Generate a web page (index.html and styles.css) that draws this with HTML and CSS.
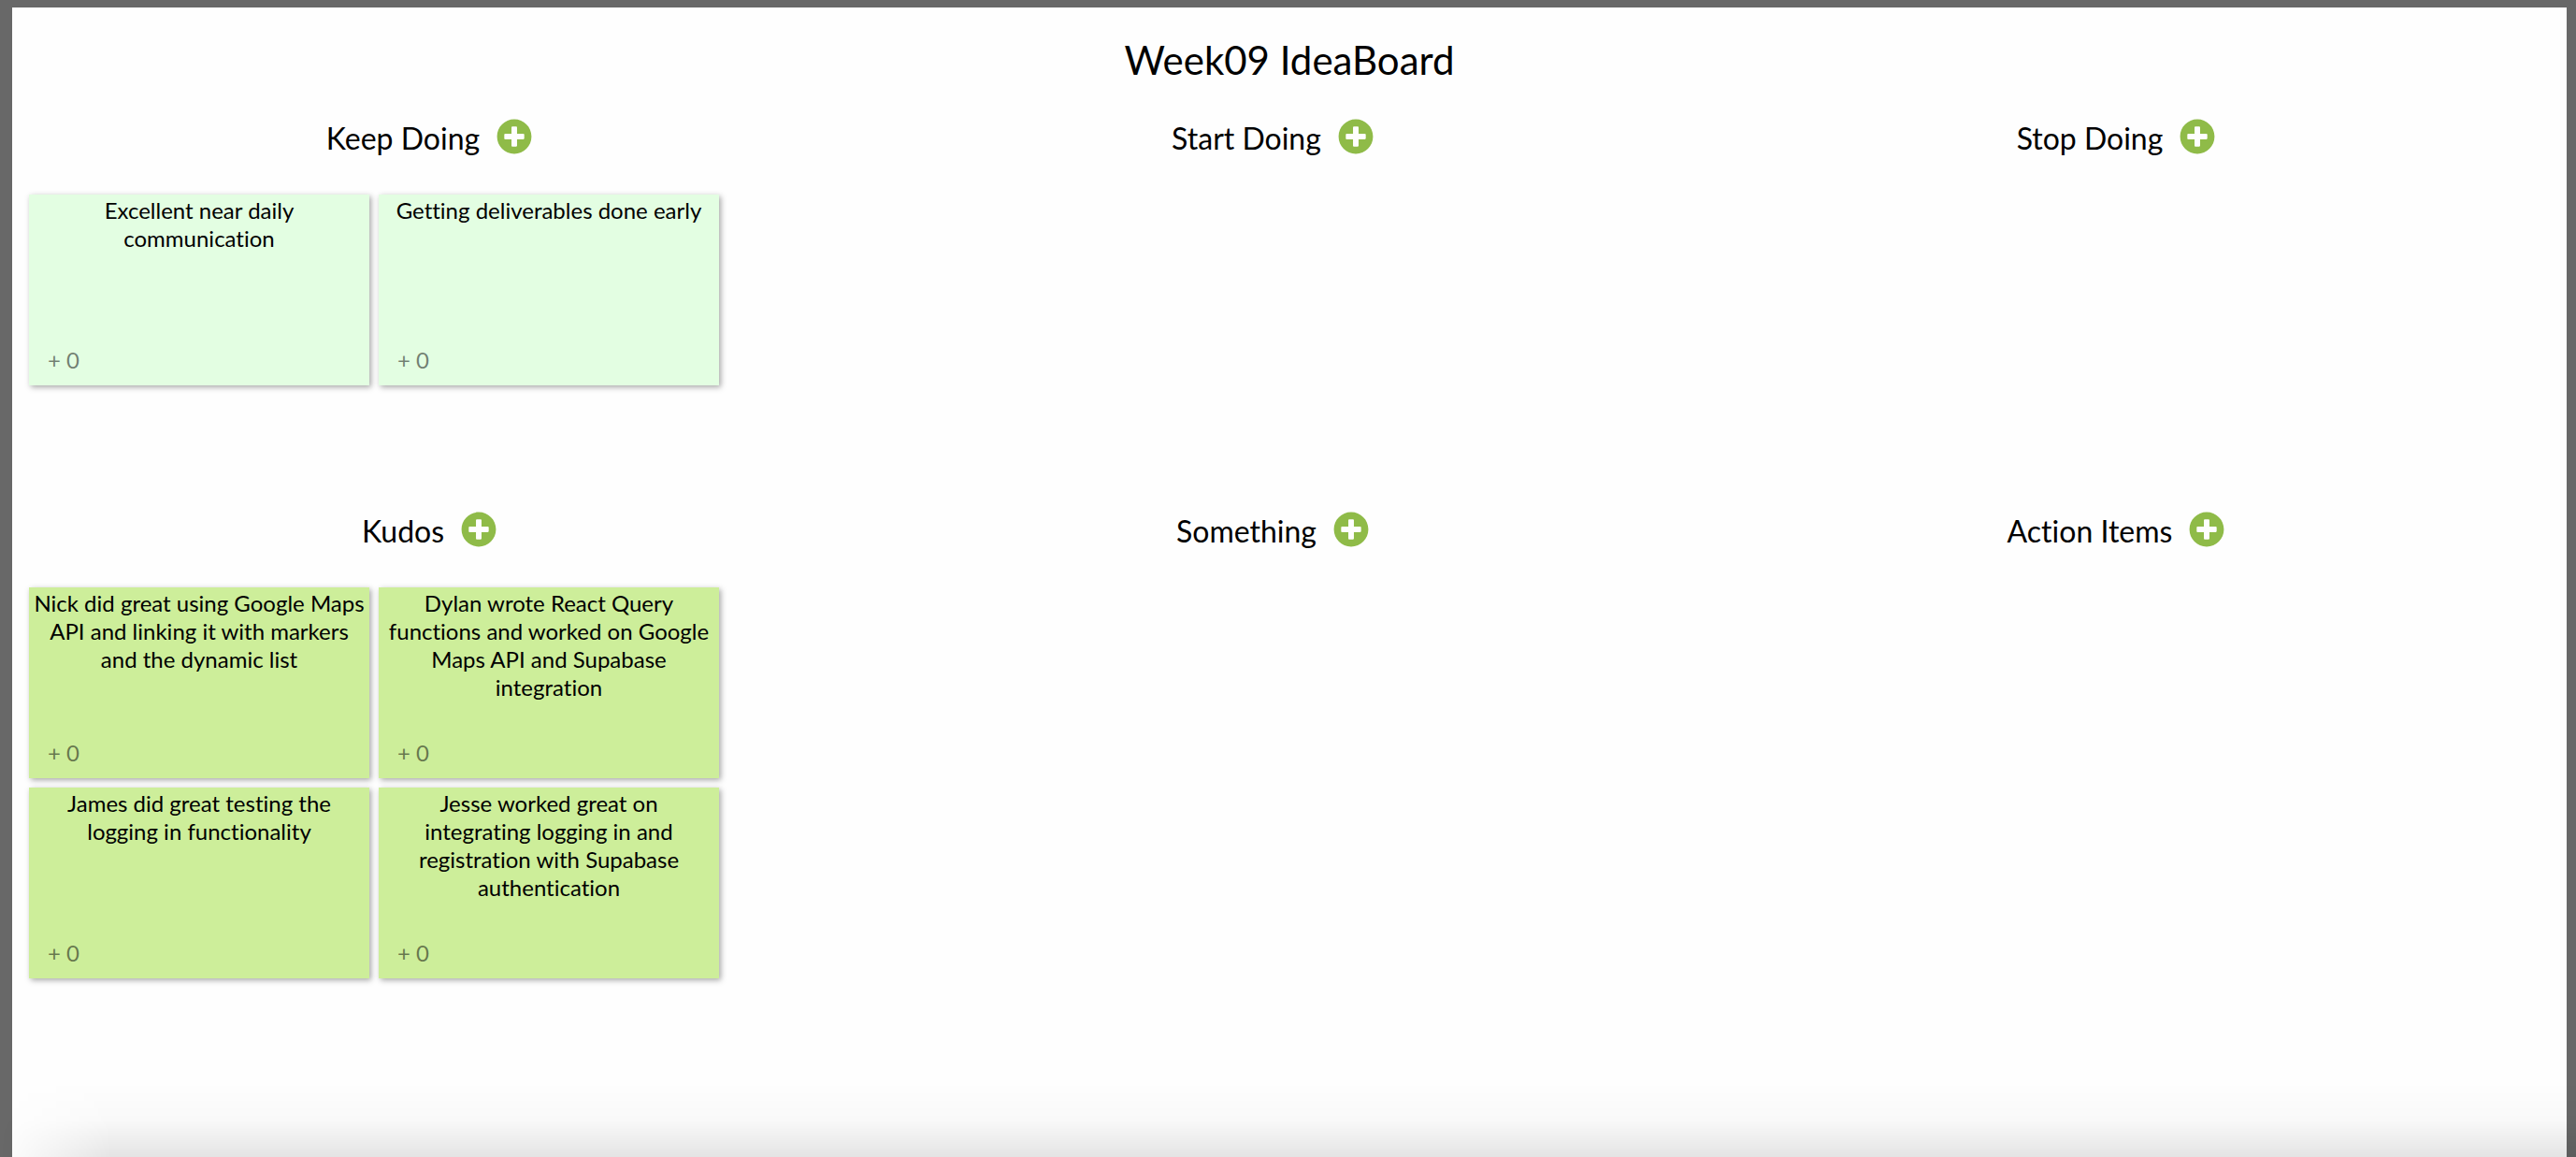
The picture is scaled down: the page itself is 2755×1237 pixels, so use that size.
FILE: index.html
```html
<!DOCTYPE html>
<html lang="en">
<head>
<meta charset="utf-8">
<meta name="viewport" content="width=device-width, initial-scale=1">
<title>Week09 IdeaBoard</title>
<link rel="stylesheet" href="styles.css">
</head>
<body>
<svg class="sprite" aria-hidden="true">
  <symbol id="plus-circle" viewBox="0 0 512 512"><path d="M256 8C119 8 8 119 8 256s111 248 248 248 248-111 248-248S393 8 256 8zm144 276c0 6.600-5.400 12-12 12h-92v92c0 6.600-5.400 12-12 12h-56c-6.600 0-12-5.400-12-12v-92h-92c-6.600 0-12-5.400-12-12v-56c0-6.600 5.400-12 12-12h92v-92c0-6.600 5.400-12 12-12h56c6.600 0 12 5.400 12 12v92h92c6.600 0 12 5.400 12 12v56z"/></symbol>
</svg>
<main class="board">
  <h1 class="board-title">Week09 IdeaBoard</h1>
  <div class="columns">
    <section class="column">
      <header class="column-head"><h2 class="column-title">Keep Doing</h2><button class="add" type="button" aria-label="Add to Keep Doing"><svg class="icon"><use href="#plus-circle"/></svg></button></header>
      <div class="cards">
        <article class="card card-mint"><p class="card-text">Excellent near daily communication</p><button class="vote" type="button">+ 0</button></article>
        <article class="card card-mint"><p class="card-text">Getting deliverables done early</p><button class="vote" type="button">+ 0</button></article>
      </div>
    </section>
    <section class="column">
      <header class="column-head"><h2 class="column-title">Start Doing</h2><button class="add" type="button" aria-label="Add to Start Doing"><svg class="icon"><use href="#plus-circle"/></svg></button></header>
    </section>
    <section class="column">
      <header class="column-head"><h2 class="column-title">Stop Doing</h2><button class="add" type="button" aria-label="Add to Stop Doing"><svg class="icon"><use href="#plus-circle"/></svg></button></header>
    </section>
    <section class="column">
      <header class="column-head"><h2 class="column-title">Kudos</h2><button class="add" type="button" aria-label="Add to Kudos"><svg class="icon"><use href="#plus-circle"/></svg></button></header>
      <div class="cards">
        <article class="card card-lime"><p class="card-text">Nick did great using Google Maps API and linking it with markers and the dynamic list</p><button class="vote" type="button">+ 0</button></article>
        <article class="card card-lime"><p class="card-text">Dylan wrote React Query functions and worked on Google Maps API and Supabase integration</p><button class="vote" type="button">+ 0</button></article>
        <article class="card card-lime"><p class="card-text">James did great testing the logging in functionality</p><button class="vote" type="button">+ 0</button></article>
        <article class="card card-lime"><p class="card-text">Jesse worked great on<br>integrating logging in and registration with Supabase authentication</p><button class="vote" type="button">+ 0</button></article>
      </div>
    </section>
    <section class="column">
      <header class="column-head"><h2 class="column-title">Something</h2><button class="add" type="button" aria-label="Add to Something"><svg class="icon"><use href="#plus-circle"/></svg></button></header>
    </section>
    <section class="column">
      <header class="column-head"><h2 class="column-title">Action Items</h2><button class="add" type="button" aria-label="Add to Action Items"><svg class="icon"><use href="#plus-circle"/></svg></button></header>
    </section>
  </div>
</main>
<div class="bottom-shade"></div>
</body>
</html>
```

FILE: styles.css
```css
* {
  box-sizing: border-box;
}

body {
  display: flex;
  min-height: 100vh;
  margin: 0;
  padding: 8px 10px 0 13px;
  background: #686868;
  color: #000;
  font-family: Lato, "Open Sans", sans-serif;
  font-variant-ligatures: none;
}

.sprite {
  position: absolute;
  width: 0;
  height: 0;
}

.board {
  flex: 1;
  padding: 28px 49px 0 13px;
  background: #fefefe;
}

.board-title {
  margin: 0 -36px 0 0;
  font-size: 42px;
  font-weight: 400;
  line-height: 56px;
  text-align: center;
}

.columns {
  display: grid;
  grid-template-columns: repeat(3, 1fr);
  grid-auto-rows: minmax(420px, auto);
  column-gap: 36px;
  padding-top: 32px;
}

.column-head {
  display: flex;
  align-items: center;
  justify-content: center;
  gap: 18px;
  height: 44px;
}

.column-title {
  margin: 0;
  padding-top: 4px;
  font-size: 32px;
  font-weight: 400;
  line-height: 40px;
}

.add {
  display: flex;
  padding: 0;
  border: 0;
  background: none;
  color: #8fbb48;
  cursor: pointer;
}

.icon {
  width: 38px;
  height: 38px;
  fill: currentColor;
}

.cards {
  display: flex;
  flex-wrap: wrap;
  gap: 10px;
  padding: 40px 5px 0;
}

.card {
  display: flex;
  flex-direction: column;
  justify-content: space-between;
  align-items: flex-start;
  width: 364px;
  min-height: 204px;
  padding: 2px 2px 12px;
  box-shadow: 2px 2px 6px rgba(0, 0, 0, 0.35);
}

.card-mint {
  background: #e3fee2;
}

.card-lime {
  background: #cdee9a;
}

.card-text {
  width: 100%;
  margin: 0;
  font-size: 24px;
  line-height: 30px;
  text-align: center;
}

.vote {
  padding: 0 18px;
  border: 0;
  background: none;
  color: rgba(0, 0, 0, 0.5);
  font: inherit;
  font-size: 24px;
  line-height: 30px;
  cursor: pointer;
}

.bottom-shade {
  position: fixed;
  right: 0;
  bottom: 0;
  left: 0;
  height: 80px;
  background: linear-gradient(to bottom, rgba(0, 0, 0, 0), rgba(0, 0, 0, 0.02) 50%, rgba(0, 0, 0, 0.1));
  mask-image: linear-gradient(to right, transparent, #000 120px);
  pointer-events: none;
}
```
